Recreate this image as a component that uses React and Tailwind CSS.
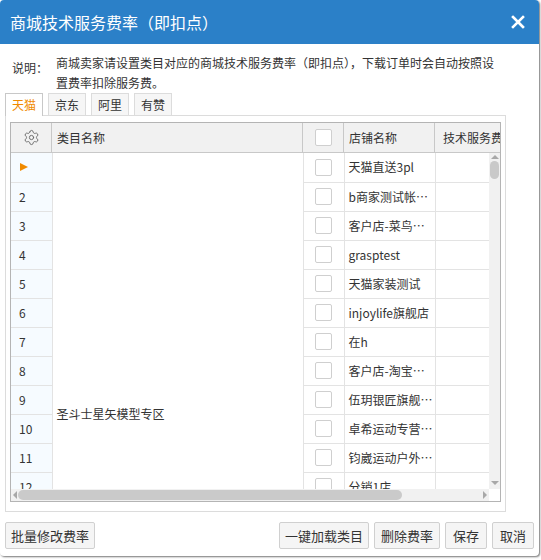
import { Settings } from 'lucide-react';

const stores = [
  '天猫直送3pl',
  'b商家测试帐号001',
  '客户店-菜鸟仓储测试',
  'grasptest',
  '天猫家装测试',
  'injoylife旗舰店',
  '在h',
  '客户店-淘宝测试店',
  '伍玥银匠旗舰店铺',
  '卓希运动专营店铺',
  '钧崴运动户外专营店',
  '分销1店',
  '测试店铺13',
  '测试店铺14',
  '测试店铺15',
  '测试店铺16',
  '测试店铺17',
  '测试店铺18',
];

const tabs = ['天猫', '京东', '阿里', '有赞'];

const Checkbox = () => (
  <div className="mx-auto h-[17px] w-[17px] rounded-[2px] border border-[#cfcfcf] bg-white" />
);

const App = () => {
  return (
    <div
      className="h-[560px] w-[541px] bg-white text-[#333]"
      style={{ fontFamily: '"Noto Sans CJK SC", "Noto Sans", sans-serif' }}
    >
      <div className="flex h-[556px] w-[539px] flex-col overflow-hidden rounded-[4px] bg-white shadow-[1px_1px_2px_rgba(0,0,0,0.55)]">
        {/* Header */}
        <div className="flex h-[44px] shrink-0 items-center justify-between bg-[#2b80c8] pl-[10px] pr-[12px] text-white">
          <span className="text-[16px] leading-none">商城技术服务费率（即扣点）</span>
          <svg width="14" height="14" viewBox="0 0 14 14" className="mr-[2px]">
            <path d="M2 2 L12 12 M12 2 L2 12" stroke="white" strokeWidth="2.6" strokeLinecap="square" />
          </svg>
        </div>

        {/* Description */}
        <div className="flex h-[48px] pl-[12px] pt-[9px] text-[12px] leading-[20px]">
          <span className="mt-[5px] w-[44px] shrink-0">说明：</span>
          <p className="w-[450px]">
            商城卖家请设置类目对应的商城技术服务费率（即扣点），下载订单时会自动按照设
            <br />
            置费率扣除服务费。
          </p>
        </div>

        {/* Tabs */}
        <div className="mt-[1px] flex gap-[5px] pl-[5px] text-[12px]">
          {tabs.map((t, i) => (
            <div
              key={t}
              className={
                i === 0
                  ? 'relative z-10 -mb-px flex h-[23px] w-[38px] items-center justify-center border border-b-0 border-[#c8c8c8] bg-white text-[#f08a00]'
                  : 'flex h-[22px] w-[38px] items-center justify-center border border-b-0 border-[#dcdcdc] bg-[#f6f6f6] text-[#333]'
              }
            >
              {t}
            </div>
          ))}
        </div>

        {/* Panel */}
        <div className="ml-[5px] h-[397px] w-[501px] shrink-0 border border-[#dcdcdc] px-[4px] pt-[6px]">
          <div className="w-[491px] border border-[#b4b4b4] bg-white text-[12px]">
            {/* Grid header */}
            <div className="flex h-[30px] border-b border-[#c8c8c8] bg-[#f1f1f1]">
              <div className="flex w-[41px] items-center justify-center border-r border-[#c8c8c8]">
                <Settings size={17} strokeWidth={1.3} className="text-[#666]" />
              </div>
              <div className="flex w-[251px] items-center border-r border-[#c8c8c8] pl-[5px]">类目名称</div>
              <div className="flex w-[41px] items-center border-r border-[#c8c8c8]">
                <Checkbox />
              </div>
              <div className="flex w-[91px] items-center border-r border-[#c8c8c8] pl-[5px]">店铺名称</div>
              <div className="flex flex-1 items-center overflow-hidden whitespace-nowrap pl-[8px]">技术服务费率</div>
            </div>

            {/* Grid body */}
            <div className="flex h-[336px]">
              <div className="h-full w-[478px] overflow-hidden">
                <table className="table-fixed border-collapse" style={{ width: 560 }}>
                  <colgroup>
                    <col style={{ width: 41 }} />
                    <col style={{ width: 251 }} />
                    <col style={{ width: 41 }} />
                    <col style={{ width: 91 }} />
                    <col style={{ width: 136 }} />
                  </colgroup>
                  <tbody>
                    {stores.map((s, i) => (
                      <tr key={i} className="h-[29px]">
                        <td className="border-r border-b border-[#e3e3e3] bg-[#f6fbff] pl-[8px] text-[12px]">
                          {i === 0 ? (
                            <svg width="10" height="10" viewBox="0 0 10 10">
                              <path d="M1 1 L9 5 L1 9 Z" fill="#f08a00" />
                            </svg>
                          ) : (
                            i + 1
                          )}
                        </td>
                        {i === 0 && (
                          <td
                            rowSpan={stores.length}
                            className="border-r border-b border-[#e3e3e3] pl-[4px] align-middle text-[12px]"
                          >
                            圣斗士星矢模型专区
                          </td>
                        )}
                        <td className="border-r border-b border-[#e3e3e3]">
                          <Checkbox />
                        </td>
                        <td className="truncate border-r border-b border-[#e3e3e3] pl-[4px] pr-0 text-[12px]">{s}</td>
                        <td className="border-b border-[#e3e3e3]" />
                      </tr>
                    ))}
                  </tbody>
                </table>
              </div>
              {/* vertical scrollbar */}
              <div className="flex w-[11px] flex-col items-center bg-[#f1f1f1] py-[2px]">
                <div className="h-0 w-0 border-x-[4px] border-b-[4px] border-x-transparent border-b-[#a8a8a8]" />
                <div className="mt-[2px] h-[18px] w-[9px] rounded-full bg-[#c9c9c9]" />
                <div className="flex-1" />
                <div className="mb-[2px] h-0 w-0 border-x-[4px] border-t-[4px] border-x-transparent border-t-[#a8a8a8]" />
              </div>
            </div>
            {/* horizontal scrollbar */}
            <div className="flex h-[12px]">
              <div className="flex w-[478px] items-center bg-[#f1f1f1] px-[2px]">
                <div className="h-0 w-0 border-y-[4px] border-r-[4px] border-y-transparent border-r-[#a8a8a8]" />
                <div className="ml-[1px] h-[10px] w-[384px] rounded-full bg-[#cacaca]" />
                <div className="flex-1" />
                <div className="h-0 w-0 border-y-[4px] border-l-[4px] border-y-transparent border-l-[#a8a8a8]" />
              </div>
              <div className="flex-1 bg-white" />
            </div>
          </div>
        </div>

        {/* Footer */}
        <div className="mt-[10px] flex items-center justify-between px-[5px] text-[13px] leading-none">
          <button className="h-[27px] w-[90px] rounded-[2px] border border-[#d0d0d0] bg-[#f5f5f5] px-0">批量修改费率</button>
          <div className="flex gap-[5px]">
            <button className="h-[27px] w-[90px] rounded-[2px] border border-[#d0d0d0] bg-[#f5f5f5] px-0">一键加载类目</button>
            <button className="h-[27px] w-[66px] rounded-[2px] border border-[#d0d0d0] bg-[#f5f5f5] px-0">删除费率</button>
            <button className="h-[27px] w-[42px] rounded-[2px] border border-[#d0d0d0] bg-[#f5f5f5] px-0">保存</button>
            <button className="h-[27px] w-[42px] rounded-[2px] border border-[#d0d0d0] bg-[#f5f5f5] px-0">取消</button>
          </div>
        </div>
      </div>
    </div>
  );
};

export default App;
